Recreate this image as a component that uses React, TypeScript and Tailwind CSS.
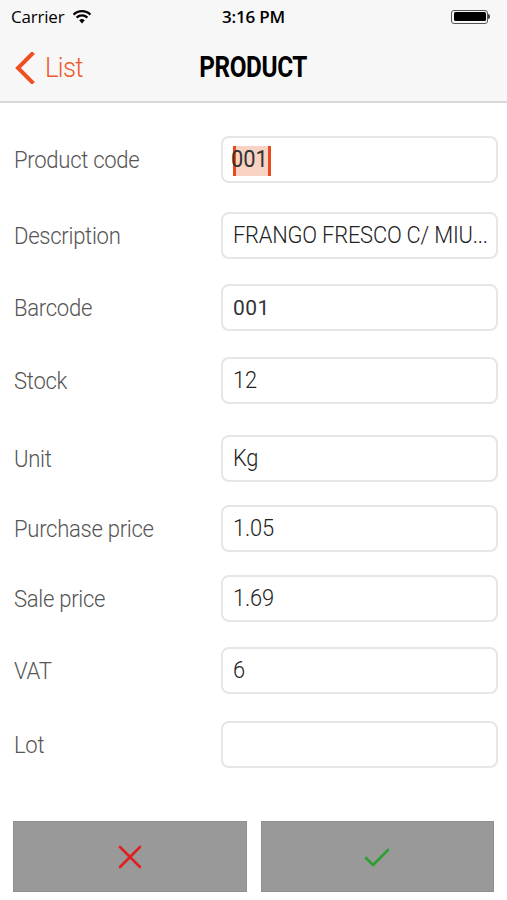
import React from "react";

const rows: { label: string; value: string; mt: string; selected?: boolean; dark?: boolean }[] = [
  { label: "Product code", value: "001", mt: "mt-[33px]", selected: true },
  { label: "Description", value: "FRANGO FRESCO C/ MIU...", mt: "mt-[29px]" },
  { label: "Barcode", value: "001", mt: "mt-[25px]", dark: true },
  { label: "Stock", value: "12", mt: "mt-[26px]" },
  { label: "Unit", value: "Kg", mt: "mt-[31px]" },
  { label: "Purchase price", value: "1.05", mt: "mt-[23px]" },
  { label: "Sale price", value: "1.69", mt: "mt-[23px]" },
  { label: "VAT", value: "6", mt: "mt-[25px]" },
  { label: "Lot", value: "", mt: "mt-[27px]" },
];

export default function App() {
  return (
    <div className="w-[507px] h-[900px] bg-white overflow-hidden flex flex-col" style={{ fontFamily: "Roboto, 'Liberation Sans', sans-serif" }}>
      {/* status + nav */}
      <div className="bg-[#f7f7f7] border-b-2 border-[#d8d8d8]">
        <div className="h-[33px] relative flex items-center px-[11px] text-[17px] text-black" style={{ fontFamily: "'Open Sans', sans-serif" }}>
          <span className="tracking-[-0.2px]">Carrier</span>
          <svg className="ml-[8px]" width="20" height="14" viewBox="0 0 20 14">
            <path d="M10 13.5 L7.2 10.3 A4.2 4.2 0 0 1 12.8 10.3 Z" fill="#000" />
            <path d="M4.6 7.6 A7.8 7.8 0 0 1 15.4 7.6" stroke="#000" strokeWidth="2.2" fill="none" />
            <path d="M1.6 4.6 A12 12 0 0 1 18.4 4.6" stroke="#000" strokeWidth="2.2" fill="none" />
          </svg>
          <span className="absolute left-0 right-0 text-center font-semibold tracking-[-0.2px] pointer-events-none">3:16 PM</span>
          <div className="ml-auto mr-[6px] flex items-center">
            <div className="w-[37px] h-[14px] rounded-[3px] border border-[#555] p-[1.5px]">
              <div className="w-full h-full bg-black rounded-[1.5px]" />
            </div>
            <div className="w-[2px] h-[5px] bg-[#444] rounded-r-sm" />
          </div>
        </div>
        <div className="h-[68px] relative flex items-center">
          <div className="flex items-center pl-[14px] pt-[2px] text-[#ee5a2f]">
            <svg width="22" height="32" viewBox="0 0 22 32">
              <path d="M18 2 L4 16 L18 30" stroke="#f04e23" strokeWidth="4" fill="none" strokeLinecap="square" />
            </svg>
            <span className="ml-[9px] text-[28px] font-light tracking-[-0.8px] origin-left scale-x-[0.92] inline-block">List</span>
          </div>
          <div className="absolute left-0 right-0 text-center pointer-events-none pt-[2px]">
            <span className="inline-block text-[29px] font-bold text-black tracking-[-0.5px] scale-x-[0.84]">PRODUCT</span>
          </div>
        </div>
      </div>

      {/* form */}
      <div className="flex flex-col">
        {rows.map((r) => (
          <div key={r.label} className={`${r.mt} flex items-center h-[47px]`}>
            <div className="w-[221px] pl-[14px] pt-[4px]">
              <span className="inline-block origin-left scale-x-[0.96] text-[23px] font-light text-[#555] tracking-[-0.3px] whitespace-nowrap">{r.label}</span>
            </div>
            <div className="w-[277px] h-[47px] border-2 border-[#e6e6e6] rounded-[8px] flex items-center pl-[10px] pt-[2px] overflow-hidden">
              {r.selected ? (
                <span className="relative inline-flex items-center h-[30px] bg-[#f8d2c2] px-[1px]">
                  <span className="absolute left-0 top-0 bottom-0 w-[3px] bg-[#e8491d]" />
                  <span className="inline-block origin-left scale-x-[0.95] text-[23px] text-[#333] -ml-[3px] pr-[0px]">001</span>
                  <span className="absolute right-0 top-0 bottom-0 w-[3px] bg-[#e8491d]" />
                </span>
              ) : r.dark ? (
                <span className="text-[21px] font-normal text-[#333] tracking-[0.5px]">{r.value}</span>
              ) : (
                <span className="inline-block origin-left scale-x-[0.95] text-[23px] font-light text-[#222] whitespace-nowrap tracking-[-0.2px]">{r.value}</span>
              )}
            </div>
          </div>
        ))}
      </div>

      {/* buttons */}
      <div className="mt-[53px] flex gap-[14px] px-[13px]">
        <button className="w-[234px] h-[71px] bg-[#999999] border border-[#8f8f8f] flex items-center justify-center">
          <svg width="24" height="24" viewBox="0 0 24 24">
            <path d="M2 2 L22 22 M22 2 L2 22" stroke="#e02020" strokeWidth="2.6" strokeLinecap="round" />
          </svg>
        </button>
        <button className="w-[234px] h-[71px] bg-[#999999] border border-[#8f8f8f] flex items-center justify-center">
          <svg width="26" height="20" viewBox="0 0 26 20">
            <path d="M2 11 L9 18 L24 3" stroke="#2e9e33" strokeWidth="2.6" fill="none" strokeLinecap="round" strokeLinejoin="round" />
          </svg>
        </button>
      </div>
    </div>
  );
}
